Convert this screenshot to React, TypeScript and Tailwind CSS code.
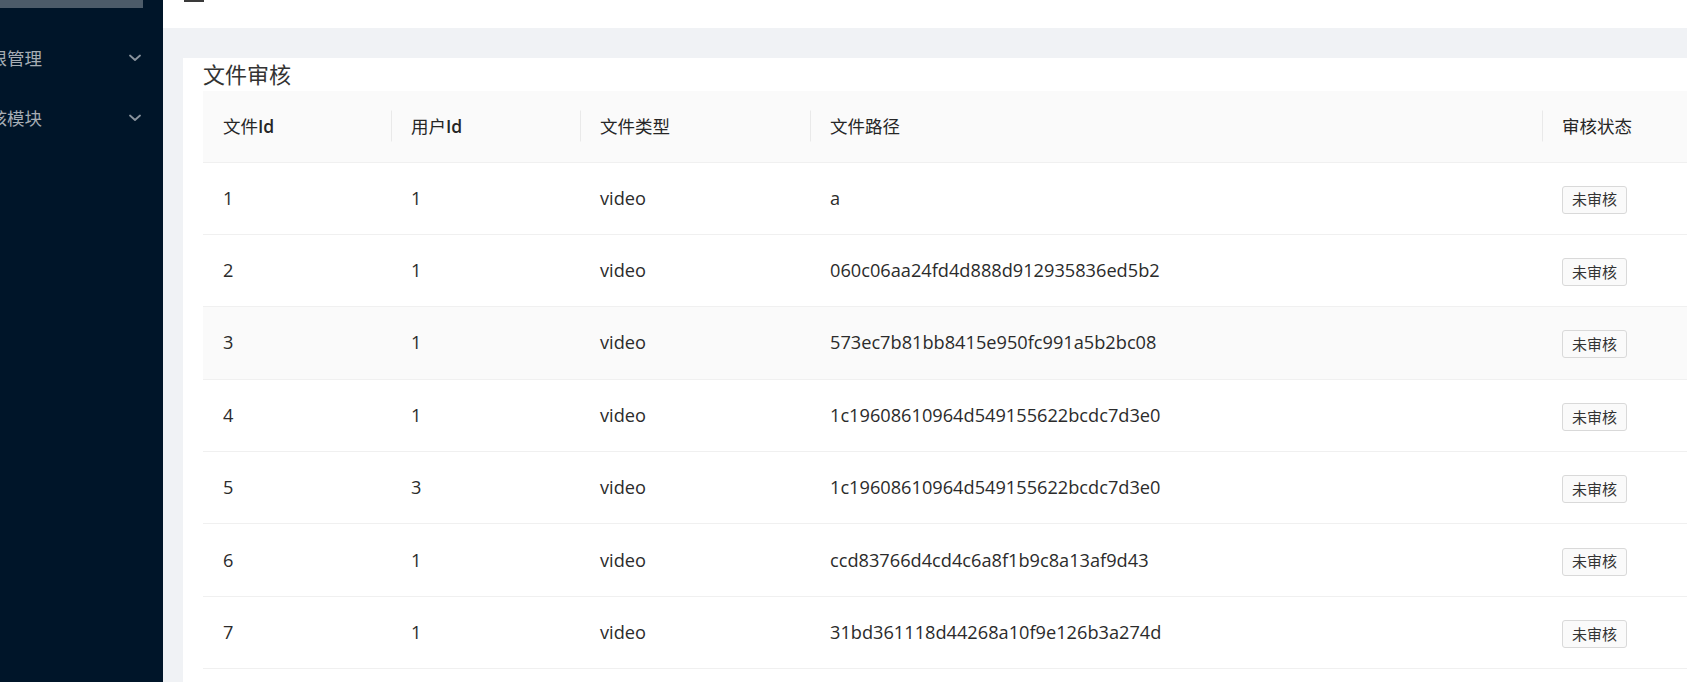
import React from "react";

const rows = [
  { id: "1", userId: "1", type: "video", path: "a" },
  { id: "2", userId: "1", type: "video", path: "060c06aa24fd4d888d912935836ed5b2" },
  { id: "3", userId: "1", type: "video", path: "573ec7b81bb8415e950fc991a5b2bc08" },
  { id: "4", userId: "1", type: "video", path: "1c19608610964d549155622bcdc7d3e0" },
  { id: "5", userId: "3", type: "video", path: "1c19608610964d549155622bcdc7d3e0" },
  { id: "6", userId: "1", type: "video", path: "ccd83766d4cd4c6a8f1b9c8a13af9d43" },
  { id: "7", userId: "1", type: "video", path: "31bd361118d44268a10f9e126b3a274d" },
];

// [cjk part, latin part]
const columns: [string, string][] = [
  ["文件", "Id"],
  ["用户", "Id"],
  ["文件类型", ""],
  ["文件路径", ""],
  ["审核状态", ""],
];

const grid = "grid grid-cols-[188px_189px_230px_732px_1fr]";

function Chevron() {
  return (
    <svg width="12" height="8" viewBox="0 0 12 8" className="text-[#8a939d]">
      <polyline
        points="1,1.5 6,6 11,1.5"
        fill="none"
        stroke="currentColor"
        strokeWidth="1.8"
        strokeLinecap="round"
        strokeLinejoin="round"
      />
    </svg>
  );
}

function Sidebar() {
  return (
    <aside className="w-[163px] shrink-0 bg-[#001529] overflow-hidden flex flex-col">
      <div className="h-[8px] w-[143px] bg-[#4c5b69]" />
      <div className="mt-[25px] flex flex-col gap-[10px]">
        {["权限管理", "审核模块"].map((label) => (
          <div key={label} className="h-[50px] flex items-center justify-between pr-[22px]">
            <span className="ml-[-28px] text-[17.5px] text-[#a6adb4] whitespace-nowrap">{label}</span>
            <Chevron />
          </div>
        ))}
      </div>
    </aside>
  );
}

export default function App() {
  return (
    <div
      className="w-[1687px] h-[682px] overflow-hidden flex bg-[#f0f2f5]"
      style={{ fontFamily: '"Open Sans", "Noto Sans CJK SC", sans-serif' }}
    >
      <Sidebar />
      <main className="flex-1 flex flex-col min-w-0">
        <header className="h-[28px] bg-white shrink-0">
          <div className="ml-[21px] w-[20px] h-[2px] bg-[#3a3a3a]" />
        </header>
        <div className="pt-[30px] pl-[20px] flex-1 min-h-0">
          <section className="bg-white h-full px-[20px] w-[1600px]">
            <h2 className="text-[22px] leading-[33px] text-[#333]">文件审核</h2>
            <div className={`${grid} bg-[#fafafa] h-[71.5px] border-b border-[#f0f0f0]`}>
              {columns.map(([cjk, latin], i) => (
                <div
                  key={cjk + i}
                  className={`relative flex items-center px-[20px] text-[17.5px] text-[#262626] ${
                    i > 0
                      ? "before:absolute before:left-0 before:top-1/2 before:-translate-y-1/2 before:h-[31px] before:w-px before:bg-[#e9e9e9]"
                      : ""
                  }`}
                >
                  <span>{cjk}</span>
                  {latin && <span className="font-semibold">{latin}</span>}
                </div>
              ))}
            </div>
            {rows.map((r, idx) => (
              <div
                key={r.id}
                className={`${grid} h-[72.4px] border-b border-[#f0f0f0] text-[18.2px] text-[#2b2b2b] ${
                  idx === 2 ? "bg-[#fafafa]" : "bg-white"
                }`}
              >
                <div className="flex items-center px-[20px]">{r.id}</div>
                <div className="flex items-center px-[20px]">{r.userId}</div>
                <div className="flex items-center px-[20px]">{r.type}</div>
                <div className="flex items-center px-[20px]">{r.path}</div>
                <div className="flex items-center px-[20px]">
                  <span className="mt-[3px] h-[28px] px-[9px] flex items-center border border-[#d9d9d9] rounded-[3px] bg-[#fafafa] text-[15px] text-[#333]">
                    未审核
                  </span>
                </div>
              </div>
            ))}
          </section>
        </div>
      </main>
    </div>
  );
}
